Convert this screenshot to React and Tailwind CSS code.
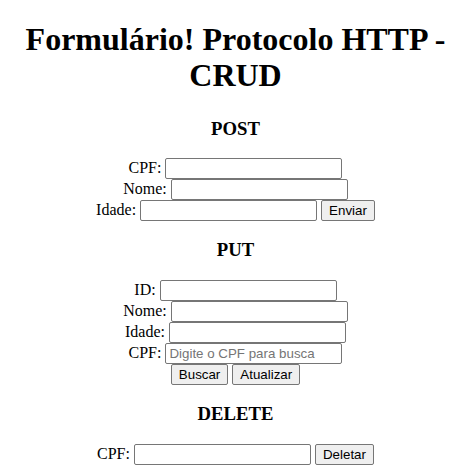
import React from "react";

const inputCls =
  "w-[177px] h-[21px] border border-[#767676] rounded-[2px] bg-white px-[3px] py-[2px] text-[13.33px] leading-normal font-['Liberation_Sans',Arial,sans-serif] text-black placeholder:text-[#757575] outline-none";
const btnCls =
  "h-[21px] border border-[#767676] rounded-[2px] bg-[#efefef] px-[7px] py-0 text-[13.33px] leading-normal font-['Liberation_Sans',Arial,sans-serif] text-black";

const Field = ({ label, placeholder, children }) => (
  <div className="flex h-[21px] items-start justify-center gap-1">
    <label className="leading-[19px]">{label}</label>
    <input type="text" className={inputCls} placeholder={placeholder} />
    {children}
  </div>
);

const App = () => {
  return (
    <div className="px-2 pt-[21px] text-center text-[16px] text-black font-['Liberation_Serif','Times_New_Roman',serif]">
      <h1 className="mb-[24.5px] text-[32px] font-bold leading-[36px]">
        Formulário! Protocolo HTTP - CRUD
      </h1>

      {/* POST */}
      <h3 className="mb-[18.72px] text-[18.72px] font-bold leading-[21.5px]">POST</h3>
      <form className="flex flex-col" onSubmit={(e) => e.preventDefault()}>
        <Field label="CPF:" />
        <Field label="Nome:" />
        <Field label="Idade:">
          <button className={btnCls}>Enviar</button>
        </Field>
      </form>

      {/* PUT */}
      <h3 className="my-[18.72px] text-[18.72px] font-bold leading-[21.5px]">PUT</h3>
      <form className="flex flex-col" onSubmit={(e) => e.preventDefault()}>
        <Field label="ID:" />
        <Field label="Nome:" />
        <Field label="Idade:" />
        <Field label="CPF:" placeholder="Digite o CPF para busca" />
        <div className="flex h-[21px] items-start justify-center gap-1">
          <button className={btnCls}>Buscar</button>
          <button className={btnCls}>Atualizar</button>
        </div>
      </form>

      {/* DELETE */}
      <h3 className="my-[18.72px] text-[18.72px] font-bold leading-[21.5px]">DELETE</h3>
      <form className="flex flex-col" onSubmit={(e) => e.preventDefault()}>
        <Field label="CPF:">
          <button className={btnCls}>Deletar</button>
        </Field>
      </form>
    </div>
  );
};

export default App;
